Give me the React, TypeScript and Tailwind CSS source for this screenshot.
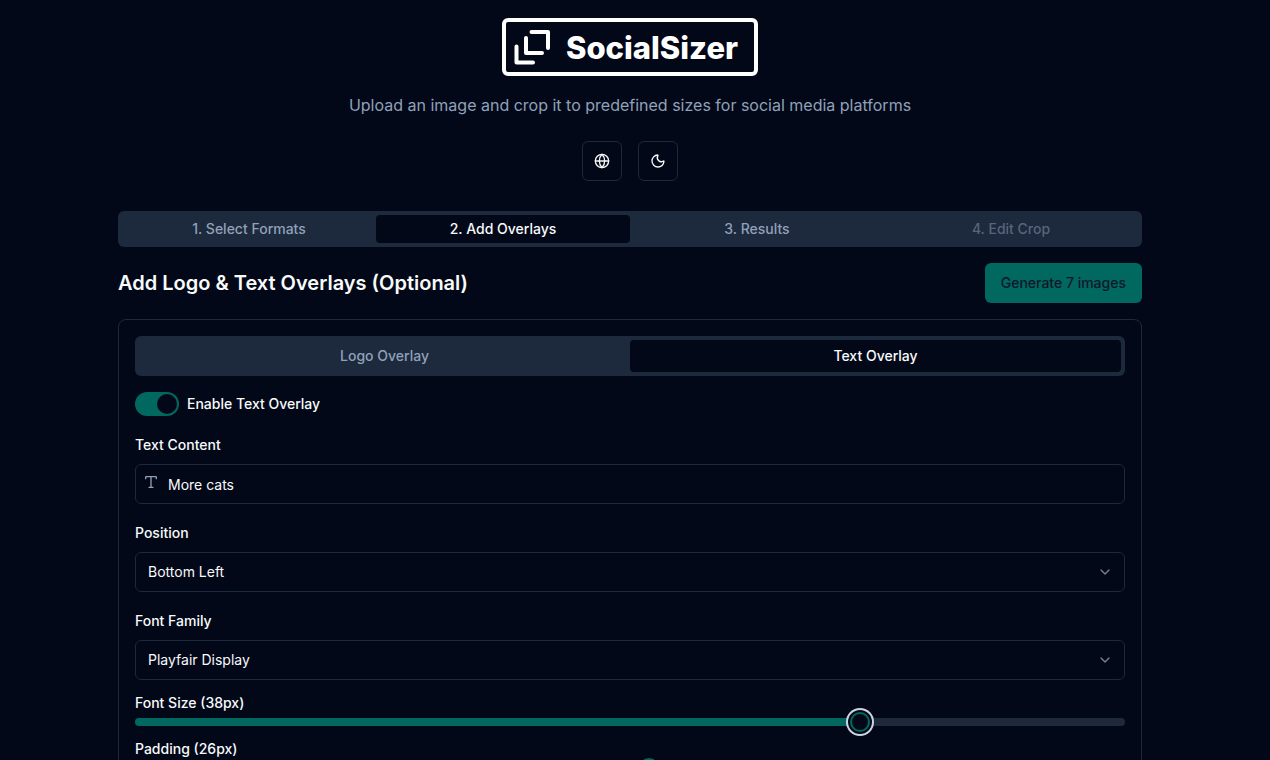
import React, { useState } from 'react';
import { ChevronDown, Globe, Moon, Type } from 'lucide-react';
import { clsx } from 'clsx';

interface SelectFieldProps {
  id: string;
  label: string;
  value: string;
  options: string[];
  onChange: (value: string) => void;
}

interface SliderFieldProps {
  id: string;
  label: string;
  value: number;
  min: number;
  max: number;
  focused?: boolean;
  onChange: (value: number) => void;
}

const steps = [
  { id: 'formats', label: '1. Select Formats', disabled: false },
  { id: 'overlays', label: '2. Add Overlays', disabled: false },
  { id: 'results', label: '3. Results', disabled: false },
  { id: 'crop', label: '4. Edit Crop', disabled: true },
];

const positions = ['Top Left', 'Top Right', 'Center', 'Bottom Left', 'Bottom Right'];
const fonts = ['Inter', 'Roboto', 'Playfair Display', 'Montserrat'];

const Logo: React.FC = () => (
  <h1 className="flex h-[58px] items-center rounded-md border-4 border-white pl-2 pr-4 text-white">
    <svg
      viewBox="0 0 36 36"
      className="h-9 w-9"
      fill="none"
      stroke="currentColor"
      strokeWidth="4"
      strokeLinecap="round"
      strokeLinejoin="round"
      aria-hidden="true"
    >
      <path d="M17.5 3H34V19" />
      <path d="M12 9V24H28" />
      <path d="M2.5 17.5V33.5H19" />
    </svg>
    <span className="ml-4 text-[31px] font-extrabold leading-none">SocialSizer</span>
  </h1>
);

const TabButton: React.FC<{
  active: boolean;
  disabled?: boolean;
  className?: string;
  onClick: () => void;
  children: React.ReactNode;
}> = ({ active, disabled, className, onClick, children }) => (
  <button
    type="button"
    role="tab"
    aria-selected={active}
    disabled={disabled}
    onClick={onClick}
    className={clsx(
      'flex-1 rounded-sm text-sm font-medium disabled:opacity-50',
      active ? 'bg-[#020817] text-slate-50' : 'text-slate-400',
      className
    )}
  >
    {children}
  </button>
);

const SelectField: React.FC<SelectFieldProps> = ({ id, label, value, options, onChange }) => (
  <div>
    <label htmlFor={id} className="mb-1.5 block text-sm font-medium leading-[26px]">
      {label}
    </label>
    <div className="relative">
      <select
        id={id}
        value={value}
        onChange={(e) => onChange(e.target.value)}
        className="h-10 w-full appearance-none rounded-md border border-slate-800 bg-[#020817] px-3 text-sm"
      >
        {options.map((option) => (
          <option key={option}>{option}</option>
        ))}
      </select>
      <ChevronDown className="pointer-events-none absolute right-3 top-3 h-4 w-4 opacity-50" />
    </div>
  </div>
);

const SliderField: React.FC<SliderFieldProps> = ({ id, label, value, min, max, focused, onChange }) => {
  const percent = ((value - min) / (max - min)) * 100;

  return (
    <div>
      <label htmlFor={id} className="mb-2 block text-sm font-medium leading-none">
        {label} ({value}px)
      </label>
      <input
        id={id}
        type="range"
        min={min}
        max={max}
        value={value}
        onChange={(e) => onChange(Number(e.target.value))}
        style={{
          backgroundImage: `linear-gradient(to right, #00685e ${percent}%, #1e293b ${percent}%)`,
        }}
        className={clsx(
          'block h-2 w-full appearance-none rounded-full outline-none',
          '[&::-webkit-slider-runnable-track]:h-2',
          '[&::-webkit-slider-thumb]:-mt-1.5 [&::-webkit-slider-thumb]:h-5 [&::-webkit-slider-thumb]:w-5 [&::-webkit-slider-thumb]:appearance-none',
          '[&::-webkit-slider-thumb]:rounded-full [&::-webkit-slider-thumb]:border-2 [&::-webkit-slider-thumb]:border-[#00685e] [&::-webkit-slider-thumb]:bg-[#020817]',
          focused && '[&::-webkit-slider-thumb]:shadow-[0_0_0_2px_#020817,0_0_0_4px_#cbd5e1]'
        )}
      />
    </div>
  );
};

const App: React.FC = () => {
  const [step, setStep] = useState('overlays');
  const [overlay, setOverlay] = useState('text');
  const [enabled, setEnabled] = useState(true);
  const [text, setText] = useState('More cats');
  const [position, setPosition] = useState('Bottom Left');
  const [font, setFont] = useState('Playfair Display');
  const [fontSize, setFontSize] = useState(38);
  const [padding, setPadding] = useState(26);

  const iconButton =
    'flex h-10 w-10 items-center justify-center rounded-md border border-slate-800';

  return (
    <div className="min-h-screen bg-[#020817] pr-2.5 font-['Inter',sans-serif] text-slate-50">
      <div className="mx-auto max-w-5xl pb-8 pt-[18px]">
        <header className="mb-[30px] flex flex-col items-center">
          <Logo />
          <p className="mt-[17px] text-slate-400">
            Upload an image and crop it to predefined sizes for social media platforms
          </p>
          <div className="mt-6 flex gap-4">
            <button type="button" aria-label="Language" className={iconButton}>
              <Globe className="h-4 w-4" />
            </button>
            <button type="button" aria-label="Toggle theme" className={iconButton}>
              <Moon className="h-4 w-4" />
            </button>
          </div>
        </header>

        <div role="tablist" className="flex rounded-md bg-slate-800 p-1">
          {steps.map((item) => (
            <TabButton
              key={item.id}
              active={step === item.id}
              disabled={item.disabled}
              className="py-1"
              onClick={() => setStep(item.id)}
            >
              {item.label}
            </TabButton>
          ))}
        </div>

        <div className="my-4 flex items-center justify-between">
          <h2 className="text-xl font-semibold">Add Logo &amp; Text Overlays (Optional)</h2>
          <button
            type="button"
            className="h-10 rounded-md bg-[#00685e] px-4 text-sm font-medium text-slate-900"
          >
            Generate 7 images
          </button>
        </div>

        <main className="space-y-4 rounded-lg border border-slate-800 p-4">
          <div role="tablist" className="flex rounded-md bg-slate-800 p-1">
            <TabButton active={overlay === 'logo'} className="py-1.5" onClick={() => setOverlay('logo')}>
              Logo Overlay
            </TabButton>
            <TabButton active={overlay === 'text'} className="py-1.5" onClick={() => setOverlay('text')}>
              Text Overlay
            </TabButton>
          </div>

          <div className="flex items-center gap-2">
            <input
              id="enable-text"
              type="checkbox"
              role="switch"
              checked={enabled}
              onChange={(e) => setEnabled(e.target.checked)}
              className="h-6 w-11 appearance-none rounded-full bg-slate-800 p-0.5 before:block before:h-5 before:w-5 before:rounded-full before:bg-[#020817] checked:bg-[#00685e] checked:before:translate-x-5"
            />
            <label htmlFor="enable-text" className="text-sm font-medium leading-none">
              Enable Text Overlay
            </label>
          </div>

          <div>
            <label htmlFor="text-content" className="mb-1.5 block text-sm font-medium leading-[26px]">
              Text Content
            </label>
            <div className="relative">
              <Type className="absolute left-2 top-2.5 h-4 w-4 text-slate-400" />
              <input
                id="text-content"
                type="text"
                value={text}
                onChange={(e) => setText(e.target.value)}
                className="block h-10 w-full rounded-md border border-slate-800 pl-8 pr-3 text-sm"
              />
            </div>
          </div>

          <SelectField id="position" label="Position" value={position} options={positions} onChange={setPosition} />
          <SelectField id="font-family" label="Font Family" value={font} options={fonts} onChange={setFont} />
          <SliderField id="font-size" label="Font Size" value={fontSize} min={10} max={48} focused onChange={setFontSize} />
          <SliderField id="padding" label="Padding" value={padding} min={0} max={50} onChange={setPadding} />
        </main>
      </div>
    </div>
  );
};

export default App;
